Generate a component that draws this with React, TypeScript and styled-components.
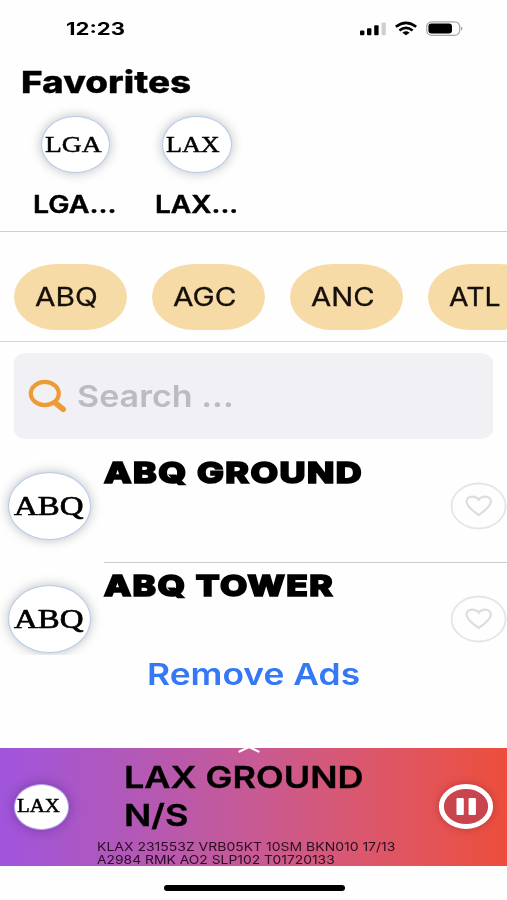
import React from "react";
import styled, { createGlobalStyle } from "styled-components";

const GlobalStyle = createGlobalStyle`
  * { box-sizing: border-box; }
  body { margin: 0; background: #fefefe; }
`;

const Screen = styled.main`
  width: 507px;
  height: 900px;
  overflow: hidden;
  display: flex;
  flex-direction: column;
  background: #fefefe;
  color: #000;
  font-family: Inter, "Liberation Sans", sans-serif;
`;

const Label = styled.span<{
  $size: number;
  $stretch: number;
  $weight?: number;
  $round?: number;
  $color?: string;
  $spacing?: number;
}>`
  display: block;
  width: max-content;
  font-size: ${(p) => p.$size}px;
  font-weight: ${(p) => p.$weight ?? 400};
  letter-spacing: ${(p) => p.$spacing ?? 0}px;
  color: ${(p) => p.$color ?? "#000"};
  line-height: inherit;
  white-space: nowrap;
  transform: scaleX(${(p) => p.$stretch});
  transform-origin: left center;
  -webkit-text-stroke: ${(p) => p.$round ?? 0}px ${(p) => p.$color ?? "#000"};
  stroke-linejoin: round;
`;

const SerifLabel = styled(Label)`
  font-family: "Liberation Serif", serif;
`;

const StatusBar = styled.header`
  height: 58px;
  flex: none;
  padding: 0 44px 0 66px;
  display: flex;
  justify-content: space-between;
  line-height: 58px;
`;

const StatusIcons = styled.div`
  display: flex;
  align-items: flex-start;
  gap: 9px;
  padding-top: 21px;
`;

const Favorites = styled.section`
  height: 173px;
  flex: none;
  border-bottom: 1px solid #cfcfd1;
  box-sizing: content-box;
`;

const Heading = styled.h1`
  margin: 0;
  padding-left: 20.5px;
  height: 48px;
  line-height: 48px;
`;

const FavoriteList = styled.div`
  display: flex;
  gap: 52px;
  padding: 9.5px 0 0 40.5px;
`;

const Favorite = styled.div`
  width: 69.5px;
`;

const Badge = styled.div<{ $w: number; $h: number; $pad: number; $dark?: boolean }>`
  width: ${(p) => p.$w}px;
  height: ${(p) => p.$h}px;
  line-height: ${(p) => p.$h - 3}px;
  padding-left: ${(p) => p.$pad}px;
  flex: none;
  border: 1.5px solid ${(p) => (p.$dark ? "#b8a6ee" : "#b3cbef")};
  border-radius: 50%;
  background: #fff;
  box-shadow: 0 0 12px ${(p) => (p.$dark ? "rgba(50,20,90,.4)" : "rgba(0,0,0,.26)")};
`;

const FavoriteName = styled.div`
  margin: 10.5px 0 0 -7.5px;
  height: 40px;
  line-height: 40px;
`;

const ChipRow = styled.nav`
  height: 110px;
  flex: none;
  display: flex;
  gap: 25px;
  padding: 32px 0 0 14.3px;
  border-bottom: 1.5px solid #d4d4d6;
  overflow: hidden;
`;

const Chip = styled.div`
  width: 113px;
  height: 66px;
  flex: none;
  padding-left: 21px;
  line-height: 66px;
  border-radius: 42px / 33px;
  background: #f7dba7;
`;

const Search = styled.div`
  margin: 11px 14px 0;
  height: 86px;
  flex: none;
  display: flex;
  align-items: center;
  gap: 9.5px;
  padding-left: 14px;
  border-radius: 12px / 10px;
  background: #f1f0f5;
  line-height: 86px;
`;

const Stations = styled.section`
  height: 216px;
  flex: none;
  overflow: hidden;
`;

const Station = styled.article`
  height: 113px;
  display: flex;
  padding: 0 0 0 8px;
`;

const StationBadge = styled.div`
  padding-top: 33px;
  width: 96px;
  flex: none;
`;

const StationBody = styled.div<{ $last?: boolean }>`
  flex: 1;
  display: flex;
  justify-content: space-between;
  margin-top: 10px;
  height: 114px;
  line-height: 48px;
  border-bottom: 1.3px solid ${(p) => (p.$last ? "transparent" : "#cccccf")};
`;

const HeartButton = styled.div`
  padding-top: 33px;
  line-height: 0;
`;

const RemoveAds = styled.div`
  height: 93px;
  flex: none;
  padding-left: 147px;
  line-height: 39px;
`;

const Player = styled.section`
  height: 118px;
  flex: none;
  display: flex;
  position: relative;
  background: linear-gradient(90deg, #a055dc 0%, #b158b9 25%, #c75a96 49%, #d95870 70%, #e55353 87%, #ec4e3b 100%);
`;

const Chevron = styled.svg`
  position: absolute;
  left: 238px;
  top: -4px;
`;

const PlayerSide = styled.div`
  padding: 36px 0 0 13.5px;
  width: 97px;
  flex: none;
`;

const PlayerText = styled.div`
  flex: 1;
`;

const Track = styled.div`
  padding: 10px 0 0 26.5px;
  line-height: 38px;
`;

const Metar = styled.div`
  margin-top: 6px;
  line-height: 13.2px;
`;

const PauseIcon = styled.svg`
  margin: 33px 10px 0 0;
  flex: none;
  filter: drop-shadow(0 0 4px rgba(120, 20, 40, 0.4));
`;

const HomeArea = styled.footer`
  flex: 1;
  padding: 19px 0 0 164px;
`;

const HomeBar = styled.div`
  width: 181px;
  height: 6px;
  border-radius: 3px;
  background: #000;
`;

const Heart = () => (
  <svg width="58" height="48" viewBox="0 0 58 48" fill="none">
    <ellipse cx="29.6" cy="24" rx="27" ry="22.5" stroke="#e4e5e6" strokeWidth="1.8" />
    <path
      d="M29.7 33C24.7 29.5 17.5 24.5 17.5 19.5C17.5 16.4 20.1 14.6 23 14.6C25.9 14.6 28.4 15.6 29.7 17.6C31 15.6 33.5 14.6 36.4 14.6C39.3 14.6 41.9 16.4 41.9 19.5C41.9 24.5 34.7 29.5 29.7 33Z"
      stroke="#dcdddf"
      strokeWidth="2.2"
    />
  </svg>
);

const chips: [string, number][] = [
  ["ABQ", 1.19],
  ["AGC", 1.19],
  ["ANC", 1.17],
  ["ATL", 1.135],
];

const favorites: [string, number, number][] = [
  ["LGA", 1.15, 1.16],
  ["LAX", 1.09, 1.145],
];

const stations: [string, number][] = [
  ["ABQ GROUND", 1.232],
  ["ABQ TOWER", 1.217],
];

export default function App() {
  return (
    <Screen>
      <GlobalStyle />
      <StatusBar>
        <Label $size={17} $stretch={1.3} $weight={700}>12:23</Label>
        <StatusIcons>
          <svg width="26" height="15" viewBox="0 0 26 15">
            <rect x="0" y="9.5" width="4.4" height="4.8" rx="1" />
            <rect x="7" y="7.3" width="4.4" height="7" rx="1" />
            <rect x="14.2" y="4.3" width="4.4" height="10" rx="1" />
            <rect x="21.6" y="1.6" width="4.2" height="12.7" rx="1" fill="#cfcfcf" />
          </svg>
          <svg width="22" height="15" viewBox="0 0 22 15" fill="none" stroke="#000" strokeWidth="2.7">
            <path d="M.8 5.8Q11-2.2 21.2 5.8" />
            <path d="M4.4 9.5Q11 4.3 17.6 9.5" />
            <path d="M11 14.3L7.4 11.7Q11 9 14.6 11.7Z" fill="#000" stroke="none" />
          </svg>
          <svg width="37" height="15" viewBox="0 0 37 15" fill="none">
            <rect x=".7" y=".8" width="33" height="13.6" rx="5" stroke="#a8a8a8" strokeWidth="1.2" />
            <rect x="2.4" y="2.6" width="23.6" height="10" rx="3" fill="#000" />
            <path d="M35 5.5Q38 7.6 35 9.7Z" fill="#a0a0a0" />
          </svg>
        </StatusIcons>
      </StatusBar>

      <Favorites>
        <Heading>
          <Label $size={30} $stretch={1.23} $weight={800} $round={0.3}>Favorites</Label>
        </Heading>
        <FavoriteList>
          {favorites.map(([code, serif, sans]) => (
            <Favorite key={code}>
              <Badge $w={69.5} $h={57.5} $pad={3}>
                <SerifLabel $size={24} $stretch={serif} $round={0.5}>{code}</SerifLabel>
              </Badge>
              <FavoriteName>
                <Label $size={24.5} $stretch={sans} $weight={600} $round={0.5}>{code}...</Label>
              </FavoriteName>
            </Favorite>
          ))}
        </FavoriteList>
      </Favorites>

      <ChipRow>
        {chips.map(([code, stretch]) => (
          <Chip key={code}>
            <Label $size={25} $stretch={stretch} $color="#15110a" $round={0.3}>{code}</Label>
          </Chip>
        ))}
      </ChipRow>

      <Search>
        <svg width="39" height="34" viewBox="0 0 39 34" fill="none" stroke="#ee9a35" strokeLinecap="round">
          <ellipse cx="16.8" cy="14.5" rx="14" ry="11.6" strokeWidth="4.2" />
          <path d="M27.5 24L35.2 30.2" strokeWidth="5.6" />
        </svg>
        <Label $size={30} $stretch={1.135} $weight={600} $color="#bbbbc0">Search ...</Label>
      </Search>

      <Stations>
        {stations.map(([name, stretch], i) => (
          <Station key={name}>
            <StationBadge>
              <Badge $w={83} $h={68} $pad={5}>
                <SerifLabel $size={28} $stretch={1.175} $round={0.7}>ABQ</SerifLabel>
              </Badge>
            </StationBadge>
            <StationBody $last={i === 1}>
              <Label $size={29} $stretch={stretch} $weight={800} $round={1.7} $spacing={1.2}>{name}</Label>
              <HeartButton><Heart /></HeartButton>
            </StationBody>
          </Station>
        ))}
      </Stations>

      <RemoveAds>
        <Label $size={30} $stretch={1.18} $weight={600} $color="#3478f6">Remove Ads</Label>
      </RemoveAds>

      <Player>
        <Chevron width="22" height="10" viewBox="0 0 22 10" fill="none">
          <path d="M1.5 7.5L11 3L20.5 7.5" stroke="#fff" strokeWidth="2.2" strokeLinecap="round" strokeLinejoin="round" />
        </Chevron>
        <PlayerSide>
          <Badge $w={55.5} $h={45.5} $pad={2.5} $dark>
            <SerifLabel $size={19} $stretch={1.1} $round={0.5}>LAX</SerifLabel>
          </Badge>
        </PlayerSide>
        <PlayerText>
          <Track>
            <Label $size={30} $stretch={1.2} $weight={600} $round={0.4}>LAX GROUND</Label>
            <Label $size={30} $stretch={1.2} $weight={600} $round={0.4}>N/S</Label>
          </Track>
          <Metar>
            <Label $size={12} $stretch={1.165} $color="#2b0c22">KLAX 231553Z VRB05KT 10SM BKN010 17/13</Label>
            <Label $size={12} $stretch={1.155} $color="#2b0c22">A2984 RMK AO2 SLP102 T01720133</Label>
          </Metar>
        </PlayerText>
        <PauseIcon width="62" height="52" viewBox="0 0 62 52" fill="none">
          <ellipse cx="31" cy="25.5" rx="24.6" ry="20" fill="#c8454d" stroke="#fff" strokeWidth="5" />
          <rect x="21.5" y="17" width="7.3" height="17" rx="1" fill="#fff" />
          <rect x="33.6" y="17" width="7.3" height="17" rx="1" fill="#fff" />
        </PauseIcon>
      </Player>

      <HomeArea>
        <HomeBar />
      </HomeArea>
    </Screen>
  );
}
